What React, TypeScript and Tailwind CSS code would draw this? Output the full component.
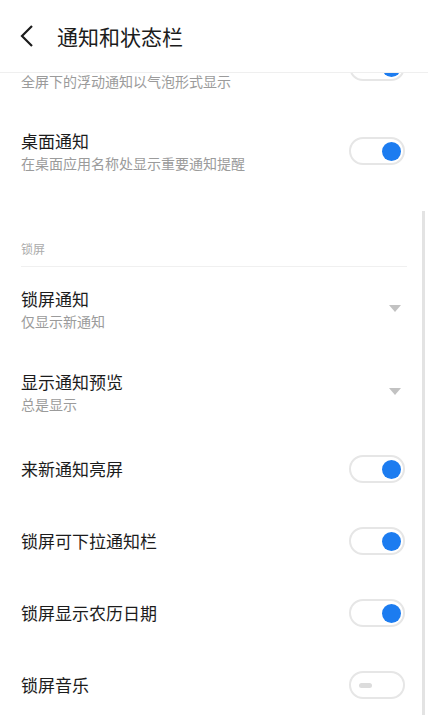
import React from 'react';

type Row =
  | { kind: 'toggle'; title: string; sub?: string; on: boolean }
  | { kind: 'select'; title: string; sub: string };

const Toggle: React.FC<{ on: boolean }> = ({ on }) => (
  <div className="w-[56px] h-[28px] rounded-full border-2 border-[#e6e6e6] bg-white flex items-center shrink-0">
    {on ? (
      <div className="ml-auto mr-[2px] w-[19px] h-[19px] rounded-full bg-[#1c7cf0]" />
    ) : (
      <div className="ml-[8px] w-[13px] h-[5px] rounded-full bg-[#dcdcdc]" />
    )}
  </div>
);

const Arrow = () => (
  <svg width="12" height="7" viewBox="0 0 12 7" className="mr-[4px] shrink-0">
    <path d="M0 0 H12 L6 7 Z" fill="#c2c2c2" />
  </svg>
);

const SettingRow: React.FC<{ row: Row; h: string }> = ({ row, h }) => (
  <div className={`flex items-center justify-between pl-[21px] pr-[23px] ${h}`}>
    <div className="flex flex-col">
      <span className="text-[17px] leading-[24px] text-[#1c1c1c]">{row.title}</span>
      {row.sub && <span className="text-[14px] leading-[20px] text-[#9b9b9b]">{row.sub}</span>}
    </div>
    {row.kind === 'toggle' ? <Toggle on={row.on} /> : <Arrow />}
  </div>
);

const lockRows: Row[] = [
  { kind: 'select', title: '锁屏通知', sub: '仅显示新通知' },
  { kind: 'select', title: '显示通知预览', sub: '总是显示' },
  { kind: 'toggle', title: '来新通知亮屏', on: true },
  { kind: 'toggle', title: '锁屏可下拉通知栏', on: true },
  { kind: 'toggle', title: '锁屏显示农历日期', on: true },
  { kind: 'toggle', title: '锁屏音乐', on: false },
];

export default function App() {
  return (
    <div
      className="relative w-[428px] h-[715px] bg-white overflow-hidden flex flex-col"
      style={{ fontFamily: '"Noto Sans CJK SC", "Noto Sans", sans-serif' }}
    >
      {/* header sits above the scrolled list */}
      <div className="relative z-10 h-[73px] shrink-0 flex items-center border-b border-[#efefef] bg-white">
        <svg width="14" height="22" viewBox="0 0 14 22" className="ml-[20px]">
          <path d="M12 1 L2 11 L12 21" fill="none" stroke="#1c1c1c" strokeWidth="2.2" />
        </svg>
        <span className="ml-[23px] text-[21px] leading-none text-[#1c1c1c]">通知和状态栏</span>
      </div>

      <div className="flex-1">
        <div className="-mt-[48px]">
          {/* row scrolled under the header: only its subtitle shows */}
          <div className="flex items-center justify-between pl-[21px] pr-[23px] h-[84px]">
            <div className="flex flex-col pt-[27px]">
              <span className="relative z-20 text-[14px] leading-[14px] text-[#9b9b9b]">全屏下的浮动通知以气泡形式显示</span>
            </div>
            <Toggle on />
          </div>
          <SettingRow
            h="h-[84px]"
            row={{ kind: 'toggle', title: '桌面通知', sub: '在桌面应用名称处显示重要通知提醒', on: true }}
          />

          <div className="mx-[21px] pt-[42px] pb-[7px] border-b border-[#f0f0f0]">
            <span className="text-[12px] leading-[20px] text-[#ababab]">锁屏</span>
          </div>

          {lockRows.map((r) => (
            <SettingRow key={r.title} row={r} h={r.sub ? 'h-[83px]' : 'h-[72px]'} />
          ))}
        </div>
      </div>

      {/* scrollbar */}
      <div className="absolute right-[3px] top-[211px] bottom-0 w-[3px] bg-[#e3e3e3]" />
    </div>
  );
}
